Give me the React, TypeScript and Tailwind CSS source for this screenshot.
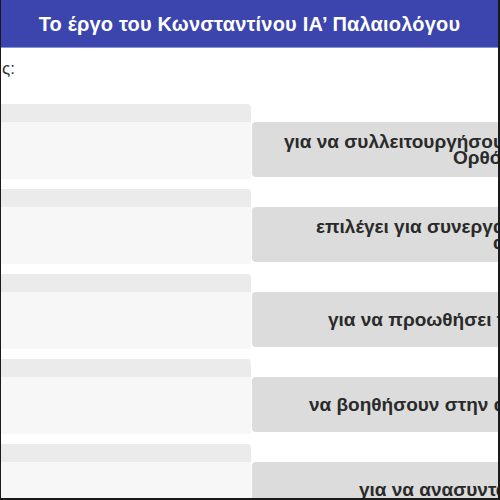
export default function App() {
  const rows = [
    {
      l1: "για να συλλειτουργήσουν οι Καθολικοί με τους",
      l2: "Ορθόδοξους",
      p1: "pl-[32px]",
      p2: "pl-[201px]",
    },
    {
      l1: "επιλέγει για συνεργάτες του εκπροσώπους και των δύο",
      l2: "αντίπαλων παρατάξεων",
      p1: "pl-[64px]",
      p2: "pl-[241px]",
    },
    { l1: "για να προωθήσει την ένωση των Εκκλησιών", l2: "", p1: "pl-[76px]", p2: "" },
    { l1: "να βοηθήσουν στην άμυνα της Πόλης", l2: "", p1: "pl-[57px]", p2: "" },
    { l1: "για να ανασυντάξει το κράτος", l2: "", p1: "pl-[107px]", p2: "" },
  ];
  return (
    <div
      className="relative w-[500px] h-[500px] overflow-hidden bg-white border-l border-r-2 border-b-2 border-[#1a1a1a]"
      style={{ fontFamily: '"Liberation Sans", Arial, sans-serif' }}
    >
      <div className="h-[48px] bg-[#3b45ad] border-b border-[#8b93d6] flex items-center justify-center">
        <span className="text-white font-bold text-[20px] tracking-[0.2px]">
          Το έργο του Κωνσταντίνου ΙΑ’ Παλαιολόγου
        </span>
      </div>
      <div className="pl-[1px] pt-[11px] text-[17px] text-[#333] leading-[20px]">ς:</div>
      <div className="flex flex-col gap-[10px] pt-[25px]">
        {rows.map((r, i) => (
          <div key={i} className="flex">
            <div className="w-[250px] shrink-0 flex flex-col">
              <div className="h-[18px] bg-[#ebebeb] rounded-tr-[4px]" />
              <div className="h-[57px] bg-[#f7f7f7]" />
            </div>
            <div className="pt-[18px] pl-[1px] shrink-0">
              <div className="w-[600px] h-[55px] rounded-[4px] bg-[#dcdcdc] flex flex-col justify-center font-bold text-[19px] leading-[16px] text-[#2a2a2a] whitespace-nowrap">
                <span className={r.p1}>{r.l1}</span>
                {r.l2 && <span className={r.p2}>{r.l2}</span>}
              </div>
            </div>
          </div>
        ))}
      </div>
    </div>
  );
}
